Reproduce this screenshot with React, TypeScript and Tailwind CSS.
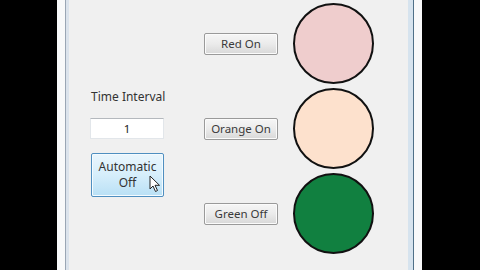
import React from "react";

const font = { fontFamily: '"Noto Sans", "Open Sans", sans-serif' };

function GrayButton({ label }: { label: string }) {
  return (
    <div className="w-[74px] h-[22px] flex items-center justify-center rounded-[2px] border border-[#9a9a9a] bg-gradient-to-b from-[#f6f6f6] via-[#ebebeb] to-[#d8d8d8] text-[11.5px] text-[#3a3a3a] shadow-[inset_0_0_0_1px_#fbfbfb]">
      {label}
    </div>
  );
}

function Circle({ color }: { color: string }) {
  return (
    <div
      className="w-[81px] h-[81px] rounded-full border-[2px] border-[#111]"
      style={{ backgroundColor: color }}
    />
  );
}

function Row({ label, color }: { label: string; color: string }) {
  return (
    <div className="flex items-center h-[85px]">
      <GrayButton label={label} />
      <div className="ml-[15px]">
        <Circle color={color} />
      </div>
    </div>
  );
}

export default function App() {
  return (
    <div className="w-[480px] h-[270px] flex bg-black overflow-hidden" style={font}>
      <div className="w-[57px] h-full bg-black" />
      <div className="w-[8px] h-full bg-[#f8f9fa]" />
      <div className="w-[1px] h-full bg-[#9aa6b4]" />
      <div className="w-[3px] h-full bg-[#dbe3ec]" />
      <div className="w-[339px] h-full bg-[#f0f0f0] flex">
        <div className="ml-[21px] w-[74px] flex flex-col pt-[89px]">
          <div className="text-[12px] text-[#333] leading-[16px] pl-[1px] whitespace-nowrap">Time Interval</div>
          <div className="mt-[13px] h-[21px] bg-white border border-[#e2e6ea] border-t-[#b4b8bd] flex items-center justify-center text-[11.5px] text-[#222]">
            1
          </div>
          <div className="mt-[14px] ml-[1px] relative h-[44px] rounded-[2px] border border-[#4f8fc0] bg-gradient-to-b from-[#eaf6fd] via-[#d6eefb] to-[#b9e0f5] shadow-[inset_0_0_0_1px_#f4fbff] flex flex-col items-center justify-center text-[12px] leading-[16px] text-[#333]">
            <span className="block">Automatic</span>
            <span className="block">Off</span>
            <svg
              className="absolute left-[57px] top-[21px]"
              width="12"
              height="18"
              viewBox="0 0 12 18"
            >
              <path
                d="M1 1 L1 14 L4 11 L6.5 16.5 L8.5 15.5 L6 10.3 L10.5 10.3 Z"
                fill="#fff"
                stroke="#222"
                strokeWidth="1"
                strokeLinejoin="round"
              />
            </svg>
          </div>
        </div>
        <div className="ml-[40px] flex flex-col pt-[1px]">
          <Row label="Red On" color="#efcdcd" />
          <Row label="Orange On" color="#fde1cd" />
          <Row label="Green Off" color="#118040" />
        </div>
      </div>
      <div className="w-[5px] h-full bg-[#d6e3ee]" />
      <div className="w-[1px] h-full bg-[#4f7088]" />
      <div className="w-[8px] h-full bg-[#f8f9fa]" />
      <div className="flex-1 h-full bg-black" />
    </div>
  );
}
